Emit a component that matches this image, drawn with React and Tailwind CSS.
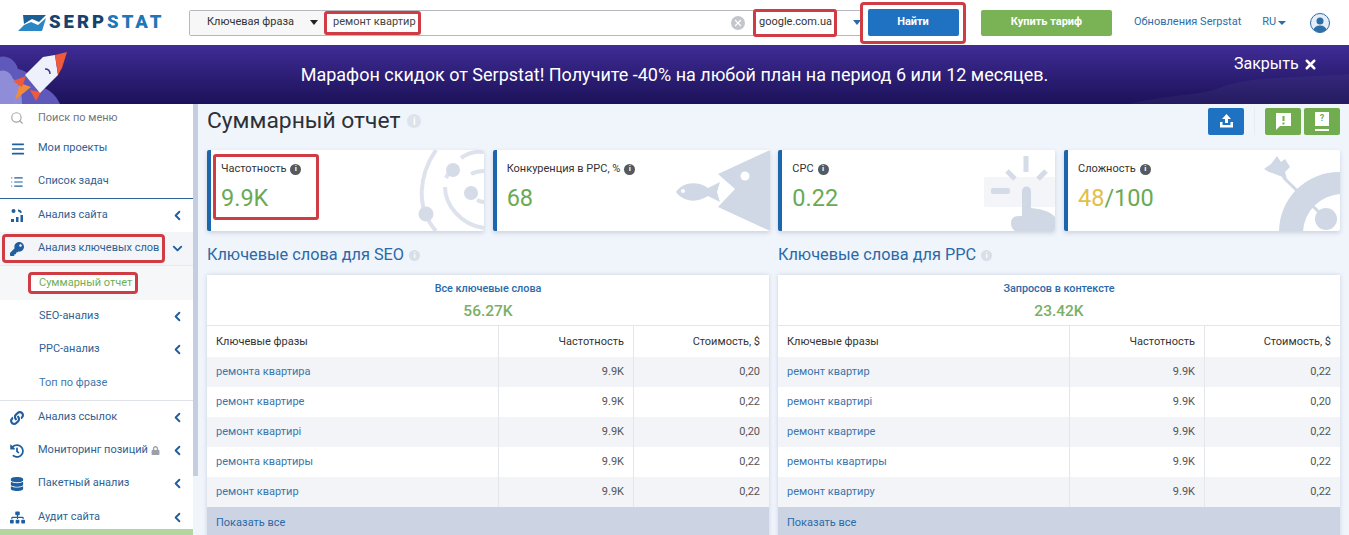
import React from 'react'
import { Search, Menu, List, ChevronLeft, ChevronDown, X } from 'lucide-react'
import { FaKey, FaLink, FaHistory, FaDatabase, FaSitemap, FaLock } from 'react-icons/fa'

const seoRows = [
  ['ремонта квартира', '9.9K', '0,20'],
  ['ремонт квартире', '9.9K', '0,22'],
  ['ремонт квартирі', '9.9K', '0,20'],
  ['ремонта квартиры', '9.9K', '0,22'],
  ['ремонт квартир', '9.9K', '0,22'],
]
const ppcRows = [
  ['ремонт квартир', '9.9K', '0,22'],
  ['ремонт квартирі', '9.9K', '0,20'],
  ['ремонт квартире', '9.9K', '0,22'],
  ['ремонты квартиры', '9.9K', '0,22'],
  ['ремонт квартиру', '9.9K', '0,22'],
]

function Info({ light }) {
  return (
    <span className={`inline-flex h-[11px] w-[11px] items-center justify-center rounded-full text-[8px] font-bold leading-none text-white ${light ? 'bg-[#d8dfe9]' : 'bg-[#555a60]'}`}>i</span>
  )
}

function SiteIcon() {
  return (
    <svg width="15" height="15" viewBox="0 0 15 15" fill="#1f5f9f">
      <circle cx="3.5" cy="3" r="2" />
      <path d="M8 1.5c2 0 3.5 1 4 3l-2 .5c-.3-1-1-1.500-2-1.500z" />
      <rect x="1" y="11" width="3" height="3" />
      <rect x="6" y="9" width="2.500" height="5" />
      <rect x="10.500" y="7" width="2.500" height="7" />
    </svg>
  )
}

function SideRow({ icon, label, arrow, sub, active, muted, tall, children }) {
  return (
    <div className={`flex items-center pr-[8px] ${tall ? 'h-[34px]' : 'h-[33px]'} ${active ? 'bg-[#f3f5f8]' : ''} ${sub ? 'pl-[39px]' : 'pl-[10px]'}`}>
      {!sub && <span className="flex w-[28px] shrink-0 items-center text-[#1f5f9f]">{icon}</span>}
      <span className={`flex-1 whitespace-nowrap text-[11px] ${muted ? 'text-[#3f78ad]' : 'text-[#2f5f93]'}`}>{label}{children}</span>
      {arrow === 'left' && <ChevronLeft size={15} strokeWidth={3} className="text-[#1f5f9f]" />}
      {arrow === 'down' && <ChevronDown size={15} strokeWidth={3} className="text-[#1f5f9f]" />}
    </div>
  )
}

function Sidebar() {
  return (
    <aside className="flex h-[431px] w-[198px] shrink-0 bg-[#f0f4fb]">
      <div className="relative w-[193px] shrink-0 bg-white">
        <div className="flex h-[28px] items-center pl-[10px]">
          <span className="flex w-[28px] items-center text-[#a3a7ab]"><Search size={14} /></span>
          <span className="text-[11px] text-[#6f7780]">Поиск по меню</span>
        </div>
        <SideRow icon={<Menu size={16} strokeWidth={2.500} />} label="Мои проекты" />
        <SideRow icon={<List size={14} />} label="Список задач" />
        <div className="h-px bg-[#2c6496]" />
        <SideRow icon={<SiteIcon />} label="Анализ сайта" arrow="left" />
        <div className="relative">
          <SideRow icon={<FaKey size={14} />} label="Анализ ключевых слов" arrow="down" active />
          <div className="absolute left-[2px] top-[2px] h-[29px] w-[163px] rounded-[4px] border-[3px] border-[#cf3c44]" />
        </div>
        <div className="flex h-[35px] items-center border-t border-[#e6e9ee] bg-[#f6f7f9] pl-[28px]">
          <span className="rounded-[4px] border-[3px] border-[#cf3c44] bg-white pl-[8px] pr-[3px] text-[11px] leading-[16px] text-[#6fae55]">Суммарный отчет</span>
        </div>
        <SideRow sub label="SEO-анализ" arrow="left" />
        <SideRow sub label="PPC-анализ" arrow="left" />
        <SideRow sub muted tall label="Топ по фразе" />
        <div className="h-px bg-[#dfe3e8]" />
        <SideRow icon={<FaLink size={14} />} label="Анализ ссылок" arrow="left" />
        <SideRow icon={<FaHistory size={14} />} label="Мониторинг позиций" arrow="left">
          <FaLock size={9} className="ml-[3px] inline text-[#9aa0a8]" />
        </SideRow>
        <SideRow icon={<FaDatabase size={14} />} label="Пакетный анализ" arrow="left" />
        <SideRow tall icon={<FaSitemap size={15} />} label="Аудит сайта" arrow="left" />
        <div className="absolute bottom-0 left-0 h-[6px] w-full bg-[#b3d5a0]" />
      </div>
      <div className="h-[372px] w-[5px] bg-[#c5cee0]" />
    </aside>
  )
}

function OrbitArt() {
  return (
    <svg className="absolute right-0 top-0" width="71" height="81" viewBox="0 0 71 81" fill="none" stroke="#dde2ec" strokeWidth="4">
      <path d="M23 0C6 25 2 57 23 81" />
      <path d="M48 8C55 3 63 1 71 2" />
      <path d="M32 37C32 55 48 75 71 78" />
      <path d="M33 28l2-4" />
      <path d="M58 24c4-2 8-3 13-3" />
      <path d="M64 50c2 1 4 2 7 2" />
      <circle cx="40" cy="20" r="7" fill="#d5dbe7" stroke="none" />
      <circle cx="58" cy="43" r="7" fill="#d5dbe7" stroke="none" />
      <circle cx="13" cy="64" r="7.500" fill="#d5dbe7" stroke="none" />
    </svg>
  )
}

function FishArt() {
  return (
    <svg className="absolute right-0 top-0" width="96" height="81" viewBox="0 0 96 81" fill="#d0d8e5">
      <path d="M96 0V81L44 57L61 39L44 24z" />
      <circle cx="71" cy="26" r="4.500" fill="#fff" />
      <path d="M2 42C8 33 22 30 34 38L46 32L43 42L46 52L34 46C22 54 8 51 2 42z" />
      <circle cx="9" cy="41" r="2" fill="#fff" />
    </svg>
  )
}

function ClickArt() {
  return (
    <svg className="absolute right-0 top-0" width="74" height="81" viewBox="0 0 74 81">
      <rect x="3" y="27" width="71" height="30" rx="2" fill="#f3f5f9" />
      <rect x="10" y="38" width="19" height="6" rx="2" fill="#d5dbe7" />
      <path d="M45 6v16M26 21l8 8M65 21l-8 8" stroke="#d5dbe7" strokeWidth="5" />
      <path d="M41 41a4.500 4.500 0 0 1 9 0v17c10 1 19 3 24 9v14H34c-4-3-5-8-3-12c2-3 6-3 10-3z" fill="#d0d8e5" />
    </svg>
  )
}

function TargetArt() {
  return (
    <svg className="absolute right-0 top-0" width="76" height="81" viewBox="0 0 76 81">
      <path d="M76 22A60 60 0 0 0 15 81H39A40 40 0 0 1 76 44z" fill="#d0d8e5" />
      <circle cx="62" cy="69" r="11" fill="#d0d8e5" />
      <path d="M62 69L19 27" stroke="#d0d8e5" strokeWidth="3" />
      <path d="M13 6L17 12L21 9L26 17L21 22L23 29L16 26L11 24L5 22L0 19L7 14z" fill="#d0d8e5" />
    </svg>
  )
}

function Card({ label, art, children }) {
  return (
    <div className="relative h-[81px] overflow-hidden rounded-[2px] border-l-[4px] border-[#1c66ad] bg-white pl-[10px] shadow-[0_2px_4px_rgba(120,135,165,0.3)]">
      {art}
      <div className="relative flex h-[18px] items-center gap-[4px] pt-[19px] text-[11px] text-[#333]">
        {label}<Info />
      </div>
      <div className="relative mt-[13px] text-[23.500px] leading-[32px] text-[#6aaa54]">{children}</div>
    </div>
  )
}

function KeywordTable({ title, value, rows }) {
  return (
    <div className="bg-white text-[11px] shadow-[0_0_4px_rgba(120,135,165,0.3)]">
      <div className="flex h-[51px] flex-col items-center border-b border-[#e3e6ea] pt-[6px]">
        <span className="text-[10.800px] font-medium leading-[15px] text-[#2a6aa8]">{title}</span>
        <span className="mt-[5px] text-[15.500px] font-medium leading-[20px] text-[#7ab067]">{value}</span>
      </div>
      <div className="grid h-[31px] grid-cols-[291px_135px_1fr] items-stretch text-[#333]">
        <div className="flex items-center pl-[9px] pt-[2px]">Ключевые фразы</div>
        <div className="flex items-center justify-end border-l border-[#e3e6ea] pr-[9px] pt-[2px]">Частотность</div>
        <div className="flex items-center justify-end border-l border-[#e3e6ea] pr-[9px] pt-[2px]">Стоимость, $</div>
      </div>
      {rows.map((row, index) => (
        <div key={index} className={`grid h-[30px] grid-cols-[291px_135px_1fr] ${index % 2 === 0 ? 'bg-[#f2f4f7]' : 'bg-white'}`}>
          <div className="flex items-center pl-[9px] text-[#3a76ad]">{row[0]}</div>
          <div className="flex items-center justify-end border-l border-[#e3e6ea] pr-[9px] text-[#555]">{row[1]}</div>
          <div className="flex items-center justify-end border-l border-[#e3e6ea] pr-[9px] text-[#555]">{row[2]}</div>
        </div>
      ))}
      <div className="flex h-[30px] items-center bg-[#ccd4e4] pl-[9px] pt-[2px] text-[#2a6aa8]">Показать все</div>
    </div>
  )
}

function Rocket() {
  return (
    <svg className="absolute left-0 top-0" width="72" height="59" viewBox="0 0 72 59">
      <path d="M0 12C8 10 16 16 18 24C28 26 36 34 38 42C48 42 56 50 60 59H0z" fill="#5f59bb" />
      <path d="M0 26C6 24 11 28 13 34C18 36 22 44 22 59H0z" fill="#8f8cd8" />
      <path d="M31 42L15 55L20 38z" fill="#f28a3c" />
      <path d="M26 31L13 36L22 42z" fill="#ef5a3c" />
      <path d="M41 47L36 56L30 45z" fill="#ef5a3c" />
      <path d="M25 30L43 12L55 10L58 30L40 48z" fill="#eef0fb" />
      <path d="M55 10L67 7L62 23L58 30z" fill="#ef5a3c" />
      <path d="M45 24c3 0 5 2 5 5" stroke="#3d3590" strokeWidth="1.500" fill="none" />
    </svg>
  )
}

function App() {
  return (
    <div className="h-[535px] w-[1349px] overflow-hidden bg-[#f0f4fb] font-['Roboto',sans-serif]">
      <header className="flex h-[45px] items-center bg-white">
        <div className="flex w-[189px] items-center pl-[18px]">
          <svg width="28" height="16" viewBox="0 0 28 16">
            <path d="M5 0H28L21 7L14 4L6 9z" fill="#1c5f97" />
            <path d="M0 16L6 10L13 7L20 10L28 3L24 16z" fill="#2a86c4" />
          </svg>
          <span className="ml-[3px] text-[18.500px] font-black leading-none tracking-[3px] text-[#16426e]">
            SERP<span className="text-[#1f77b8]">STAT</span>
          </span>
        </div>
        <div className="flex h-[26px] w-[673px] items-center rounded-[2px] border border-[#b5b8bc] bg-white">
          <div className="flex h-full w-[134px] items-center justify-between bg-[#f7f7f7] pl-[17px] pr-[6px] text-[11px] text-[#333]">
            Ключевая фраза
            <span className="h-0 w-0 border-x-[4px] border-t-[5px] border-x-transparent border-t-[#222]" />
          </div>
          <div className="flex h-[24px] w-[97px] items-center rounded-[3px] border-[3px] border-[#cf3c44] pl-[6px] text-[11px] text-[#444]">ремонт квартир</div>
          <div className="flex-1" />
          <span className="mr-[8px] flex h-[14px] w-[14px] items-center justify-center rounded-full bg-[#c3c7cd] text-white"><X size={10} strokeWidth={3} /></span>
          <div className="flex h-[28px] w-[84px] items-center rounded-[3px] border-[3px] border-[#cf3c44] bg-white pl-[3px] text-[11px] text-[#333]">google.com.ua</div>
          <span className="ml-[16px] h-0 w-0 border-x-[4px] border-t-[5px] border-x-transparent border-t-[#2a6aa8]" />
        </div>
        <div className="-ml-[2px] flex h-[42px] w-[106px] items-center justify-center rounded-[4px] border-[3px] border-[#cf3c44]">
          <button className="h-[27px] w-[91px] rounded-[2px] bg-[#1f71c1] text-[11px] font-bold text-white">Найти</button>
        </div>
        <button className="ml-[15px] h-[26px] w-[131px] rounded-[2px] bg-[#7ab356] text-[11px] font-bold text-white">Купить тариф</button>
        <span className="ml-[22px] whitespace-nowrap text-[11px] text-[#2f6da6]">Обновления Serpstat</span>
        <span className="ml-[21px] flex items-center gap-[2px] text-[11px] text-[#2f6da6]">RU<span className="h-0 w-0 border-x-[4px] border-t-[4px] border-x-transparent border-t-[#2f6da6]" /></span>
        <svg className="ml-[24px]" width="20" height="20" viewBox="0 0 20 20">
          <circle cx="10" cy="10" r="9.500" fill="#e3eef8" stroke="#2f6da6" />
          <circle cx="10" cy="8" r="3.500" fill="#2f6da6" />
          <path d="M3.500 16.500C5 13 8 12.500 10 12.500S15 13 16.500 16.500A9 9 0 0 1 3.500 16.500z" fill="#2f6da6" />
        </svg>
      </header>

      <div className="relative flex h-[59px] items-center justify-center overflow-hidden bg-gradient-to-b from-[#402c96] to-[#1c1259] text-white">
        <Rocket />
        <svg className="absolute bottom-0 right-0" width="220" height="30" viewBox="0 0 220 30" fill="#fff" fillOpacity="0.04">
          <path d="M0 30C40 20 70 22 90 14C120 2 170 4 220 0V30z" />
        </svg>
        <span className="relative text-[18px] leading-none">Марафон скидок от Serpstat! Получите -40% на любой план на период 6 или 12 месяцев.</span>
        <span className="absolute left-[1234px] top-[9px] flex items-center gap-[4px] text-[16px] leading-[20px]">Закрыть <X size={15} strokeWidth={4} /></span>
      </div>

      <div className="flex">
        <Sidebar />
        <main className="w-[1151px] pl-[9px] pr-[9px]">
          <div className="flex h-[46px] items-center justify-between pb-[12px]">
            <h1 className="flex items-center gap-[7px] text-[22.800px] text-[#2c3138]">Суммарный отчет <span className="inline-flex h-[14px] w-[14px] items-center justify-center rounded-full bg-[#dde3ec] text-[10px] font-bold text-white">i</span></h1>
            <div className="flex items-center">
              <button className="flex h-[27px] w-[36px] items-center justify-center rounded-[2px] bg-[#1f71c1]">
                <svg width="13" height="14" viewBox="0 0 13 14" fill="#fff">
                  <path d="M6.500 0L11 5H8V9H5V5H2z" />
                  <path d="M0 8H2.500V11H10.500V8H13V13.500H0z" />
                </svg>
              </button>
              <span className="mx-[10px] h-[27px] w-px bg-[#e6eaf1]" />
              <button className="flex h-[27px] w-[36px] items-center justify-center rounded-[2px] bg-[#71ad4f]">
                <svg width="16" height="17" viewBox="0 0 16 17">
                  <path d="M1 0H16V13H5L1 17z" fill="#fff" />
                  <path d="M7.500 3H9.500V8H7.500zM7.500 9.500H9.500V11.500H7.500z" fill="#71ad4f" />
                </svg>
              </button>
              <button className="ml-[3px] flex h-[27px] w-[36px] items-center justify-center rounded-[2px] bg-[#71ad4f]">
                <span className="flex h-[19px] w-[14px] items-start justify-center border-b-2 border-white text-[0px]">
                  <span className="flex h-[14px] w-[14px] items-center justify-center bg-white text-[9px] font-bold text-[#71ad4f]">?</span>
                </span>
              </button>
            </div>
          </div>

          <div className="grid grid-cols-[277px_277px_277px_276px] gap-[8.670px]">
            <div className="relative">
              <Card label="Частотность" art={<OrbitArt />}>9.9K</Card>
              <div className="absolute left-[6px] top-[4px] h-[66px] w-[106px] rounded-[3px] border-[3px] border-[#cf3c44]" />
            </div>
            <Card label="Конкуренция в PPC, %" art={<FishArt />}>68</Card>
            <Card label="CPC" art={<ClickArt />}>0.22</Card>
            <Card label="Сложность" art={<TargetArt />}>
              <span className="text-[#e2bf48]">48</span>/100
            </Card>
          </div>

          <div className="mt-[13px] grid grid-cols-2 gap-[9px]">
            <div>
              <h2 className="mb-[8px] flex h-[23px] items-center gap-[5px] text-[16.300px] font-normal text-[#2a6aa8]">Ключевые слова для SEO <Info light /></h2>
              <KeywordTable title="Все ключевые слова" value="56.27K" rows={seoRows} />
            </div>
            <div>
              <h2 className="mb-[8px] flex h-[23px] items-center gap-[5px] text-[16.300px] font-normal text-[#2a6aa8]">Ключевые слова для PPC <Info light /></h2>
              <KeywordTable title="Запросов в контексте" value="23.42K" rows={ppcRows} />
            </div>
          </div>
        </main>
      </div>
    </div>
  )
}

export default App
